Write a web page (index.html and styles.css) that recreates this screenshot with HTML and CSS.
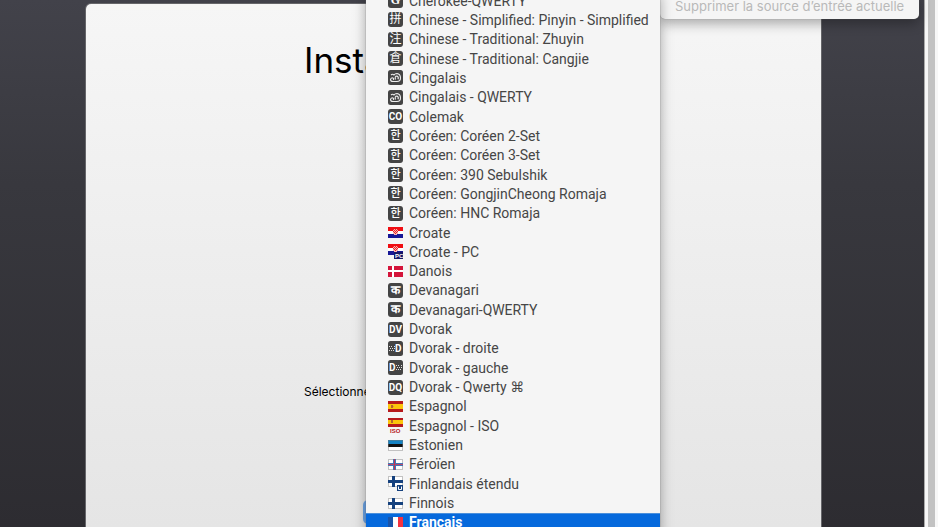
FILE: index.html
```html
<!DOCTYPE html>
<html lang="fr">
<head>
<meta charset="utf-8">
<title>Installation</title>
<link rel="stylesheet" href="styles.css">
</head>
<body>
<div class="screen">
  <main class="desktop">
    <section class="window">
      <h1 class="title">Insta</h1>
      <p class="prompt">Sélectionne</p>
      <button class="ring" type="button" aria-label="Source"></button>
    </section>
  </main>
  <div class="gutter"><div class="thumb"></div></div>
</div>

<div class="submenu"><button class="remove" type="button" disabled>Supprimer la source d’entrée actuelle</button></div>

<nav class="menu" id="menu" aria-label="Sources d’entrée"></nav>
<script src="menu.js"></script>
</body>
</html>
```
FILE: menu.js
```js
const chip = (text, kind) => `<span class="chip ${kind}">${text}</span>`;
const svg = (h, body) => `<svg class="flag" width="15" height="${h}" viewBox="0 0 15 ${h}" aria-hidden="true">${body}</svg>`;
const r = (x, y, w, h, fill) => `<rect x="${x}" y="${y}" width="${w}" height="${h}" fill="${fill}"/>`;

const stripes = (a, b, c) => r(0, 0, 15, 4, a) + r(0, 4, 15, 3, b) + r(0, 7, 15, 4, c);
const edge = '<rect x=".5" y=".5" width="14" height="10" fill="none" stroke="#777" stroke-opacity=".45"/>';
const checks = [[5, 2], [7, 2], [9, 2], [6, 3], [8, 3], [5, 4], [7, 4], [9, 4], [6, 5], [8, 5], [7, 6]]
  .map(([x, y]) => r(x, y, 1, 1, '#e22')).join('');
const croatia = stripes('#f00d12', '#fff', '#171796') + r(5, 2, 5, 5, '#f7b5b5') + r(6, 7, 3, 1, '#f7b5b5') + checks;
const spain = r(0, 0, 15, 11, '#b7191c') + r(0, 3, 15, 5, '#fcc40b') + r(3, 4, 2, 3, '#b5642e') + r(5, 5, 1, 1, '#e09040');
const finland = r(0, 0, 15, 11, '#fff') + edge + r(0, 4, 15, 3, '#15417e') + r(4, 0, 3, 11, '#15417e');

const dots = (x) => [[0, 0], [2, 0], [5, 0], [1, 2], [3, 2], [5, 2], [0, 4], [2, 4], [4, 4]]
  .map(([dx, dy]) => r(x + dx, 5 + dy, 1, 1, '#ddd')).join('');
const dark = (body) => svg(15, `<rect width="15" height="15" rx="2.5" fill="#444"/>${body}`);

const icons = {
  cherokee: chip('G', 'serif'),
  pinyin: chip('拼', 'han'),
  zhuyin: chip('注', 'han'),
  cangjie: chip('倉', 'han'),
  sinhala: dark('<path d="M3 5Q4.500 3.500 6 5Q7 3.500 9 3.500Q12.500 4 12.500 8Q12.500 11.500 9 11.500H5Q2.500 11.500 2.500 9.500Q3 7.500 5 8Q6.500 9 5 9.700M7.500 9.500Q6.500 6 9 6Q11 7 10 9.300" fill="none" stroke="#eee" stroke-width="1.100"/>'),
  colemak: chip('CO', 'latin'),
  korean: chip('한', 'hangul'),
  croatia: svg(11, croatia),
  croatiaPc: svg(15, croatia + r(6, 8, 9, 7, '#171766') + '<text class="tag" x="7" y="14" fill="#fff">PC</text>'),
  denmark: svg(11, r(0, 0, 15, 11, '#d4143a') + r(0, 4, 15, 2, '#fff') + r(4, 0, 2, 11, '#fff')),
  devanagari: chip('क', 'indic'),
  dv: chip('DV', 'latin'),
  right: dark(dots(1) + '<text class="letter" x="7" y="11">D</text>'),
  left: dark('<text class="letter" x="1" y="11">D</text>' + dots(8)),
  dq: chip('DQ', 'latin'),
  spain: svg(11, spain),
  spainIso: svg(15, r(0, 0, 15, 9, '#b7191c') + r(0, 2, 15, 4, '#fcc40b') + r(3, 2, 2, 3, '#b5642e') + '<text class="tag" x="2" y="15" fill="#b7191c">ISO</text>'),
  estonia: svg(11, stripes('#1583c4', '#111', '#fff') + edge),
  faroe: svg(11, r(0, 0, 15, 11, '#fff') + edge + r(0, 4, 15, 3, '#3f78b8') + r(5, 0, 3, 11, '#3f78b8') + r(0, 5, 15, 1, '#b8456a') + r(6, 0, 1, 11, '#c33553')),
  finlandU: svg(15, finland + r(9, 9, 6, 6, '#15417e') + '<path d="M10.500 10.500V13.500H13.500V10.500" fill="none" stroke="#fff"/>'),
  finland: svg(11, finland),
  france: svg(11, r(0, 0, 5, 11, '#1a54a8') + r(5, 0, 5, 11, '#fff') + r(10, 0, 5, 11, '#f5333f')),
};

const sources = [
  ['cherokee', 'Cherokee-QWERTY'],
  ['pinyin', 'Chinese - Simplified: Pinyin - Simplified'],
  ['zhuyin', 'Chinese - Traditional: Zhuyin'],
  ['cangjie', 'Chinese - Traditional: Cangjie'],
  ['sinhala', 'Cingalais'],
  ['sinhala', 'Cingalais - QWERTY'],
  ['colemak', 'Colemak'],
  ['korean', 'Coréen: Coréen 2-Set'],
  ['korean', 'Coréen: Coréen 3-Set'],
  ['korean', 'Coréen: 390 Sebulshik'],
  ['korean', 'Coréen: GongjinCheong Romaja'],
  ['korean', 'Coréen: HNC Romaja'],
  ['croatia', 'Croate'],
  ['croatiaPc', 'Croate - PC'],
  ['denmark', 'Danois'],
  ['devanagari', 'Devanagari'],
  ['devanagari', 'Devanagari-QWERTY'],
  ['dv', 'Dvorak'],
  ['right', 'Dvorak - droite'],
  ['left', 'Dvorak - gauche'],
  ['dq', 'Dvorak - Qwerty ⌘'],
  ['spain', 'Espagnol'],
  ['spainIso', 'Espagnol - ISO'],
  ['estonia', 'Estonien'],
  ['faroe', 'Féroïen'],
  ['finlandU', 'Finlandais étendu'],
  ['finland', 'Finnois'],
  ['france', 'Français'],
];

document.getElementById('menu').innerHTML = sources.map(([icon, label]) =>
  `<button type="button" class="item${label === 'Français' ? ' selected' : ''}"><span class="icon">${icons[icon]}</span><span>${label}</span></button>`
).join('');
```
FILE: styles.css
```css
* { box-sizing: border-box; }

body {
  margin: 0;
  overflow: hidden;
  font-family: Roboto, "DejaVu Sans", "Noto Sans CJK SC", sans-serif;
  font-size: 13px;
}

button {
  border: 0;
  padding: 0;
  background: none;
  font: inherit;
  text-align: left;
}

.screen {
  display: flex;
  height: 100vh;
}

.desktop {
  flex: 1;
  display: flex;
  padding: 4px 103px 0 86px;
  background: linear-gradient(#42424a, #38383e 35%, #2d2c31);
}

.window {
  flex: 1;
  display: flex;
  flex-direction: column;
  padding-left: 218px;
  border-radius: 5px 5px 0 0;
  background: linear-gradient(#f6f6f6, #e5e5e5);
  box-shadow: 0 0 0 1px #66666a;
}

.title {
  margin: 32px 0 0;
  font: 400 35px/48px Inter, sans-serif;
}

.prompt {
  margin: 300px 0 0;
  font: 12px/16px Inter, sans-serif;
}

.ring {
  width: 100px;
  height: 24px;
  margin: 100px 0 0 59px;
  border-radius: 5px;
  background: #6ca5e8;
}

.gutter {
  width: 14px;
  padding: 0 3px;
  border-left: 1px solid #aaa;
  background: #f7f7f7;
}

.thumb {
  height: 100%;
  background: #c2c2c2;
}

.submenu {
  position: absolute;
  top: -6px;
  left: 660px;
  padding: 2px 15px;
  border-radius: 0 0 5px 5px;
  background: #f5f5f5;
  box-shadow: 0 0 1px #777, 0 5px 12px rgba(0, 0, 0, .3);
}

.remove {
  color: #b9b9b9;
  font: 13px/21px Inter, sans-serif;
  white-space: nowrap;
}

.menu {
  position: absolute;
  top: -9px;
  bottom: -5px;
  left: 366px;
  width: 294px;
  display: grid;
  grid-auto-rows: 1fr;
  background: #f5f5f5;
  box-shadow: 0 0 1px #777, 0 5px 12px rgba(0, 0, 0, .35);
}

.item {
  display: flex;
  align-items: center;
  gap: 6px;
  padding-left: 22px;
  color: #464646;
  font-size: 14px;
  line-height: 18px;
  white-space: nowrap;
}

.selected {
  background: #0669dc;
  box-shadow: inset 0 1px #4a8fdc;
  color: #fff;
  font-weight: 700;
}

.icon {
  display: flex;
  align-items: center;
  width: 15px;
  height: 15px;
}

.flag { display: block; }

.chip {
  display: flex;
  align-items: center;
  justify-content: center;
  width: 15px;
  height: 15px;
  border-radius: 3px;
  background: #444;
  color: #fff;
  font-size: 12px;
  line-height: 15px;
}

.hangul {
  font-size: 11px;
  font-weight: 500;
}

.indic {
  font-weight: 700;
}

.serif {
  font: 700 12px/15px "Liberation Serif", serif;
}

.latin {
  font: 700 10px/15px Roboto, sans-serif;
}

.letter {
  fill: #fff;
  font: 700 10px Roboto, sans-serif;
}

.tag {
  font: 700 6px "Liberation Sans", sans-serif;
}
```
